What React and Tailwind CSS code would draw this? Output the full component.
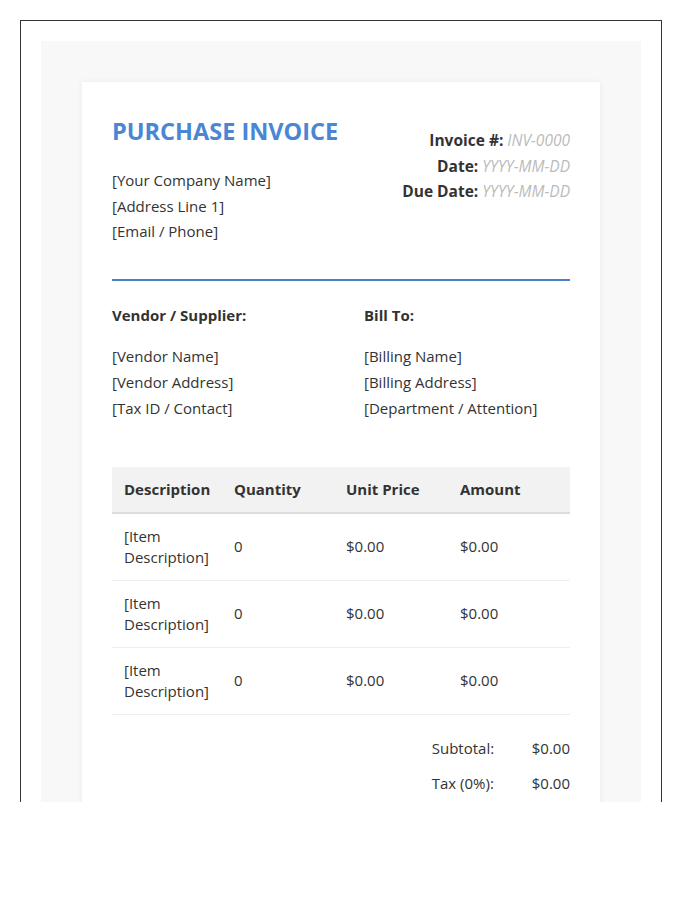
export default function App() {
  const rows = [0, 1, 2];
  return (
    <div className="bg-white w-[700px] h-[900px]" style={{ fontFamily: '"Open Sans", sans-serif' }}>
      <div className="ml-[20px] mt-[20px] w-[642px] h-[782px] border border-b-0 border-[#333] overflow-hidden p-[20px]">
        <div className="bg-[#f8f8f8] px-[41px] pt-[41px] pb-10">
          <div className="bg-white shadow-[0_0_6px_rgba(0,0,0,0.06)] p-[30px] text-[#333] text-[15px]">
            <div className="flex justify-between">
              <div>
                <h1 className="text-[23.5px] font-bold text-[#4a86d4] leading-[32px] mt-[3px]">PURCHASE INVOICE</h1>
                <div className="mt-[21px] leading-[25.6px]">
                  <p>[Your Company Name]</p>
                  <p>[Address Line 1]</p>
                  <p>[Email / Phone]</p>
                </div>
              </div>
              <div className="text-right leading-[25.5px] mt-[16px] text-[15.5px]">
                <p><b>Invoice #:</b> <i className="text-[#bbb]">INV-0000</i></p>
                <p><b>Date:</b> <i className="text-[#bbb]">YYYY-MM-DD</i></p>
                <p><b>Due Date:</b> <i className="text-[#bbb]">YYYY-MM-DD</i></p>
              </div>
            </div>
            <div className="h-[2px] bg-[#4a82c8] mt-[34px]" />
            <div className="grid grid-cols-[252px_1fr] mt-[22px] leading-[25.6px]">
              <div>
                <p className="font-bold">Vendor / Supplier:</p>
                <div className="mt-[16px]">
                  <p>[Vendor Name]</p>
                  <p>[Vendor Address]</p>
                  <p>[Tax ID / Contact]</p>
                </div>
              </div>
              <div>
                <p className="font-bold">Bill To:</p>
                <div className="mt-[16px]">
                  <p>[Billing Name]</p>
                  <p>[Billing Address]</p>
                  <p>[Department / Attention]</p>
                </div>
              </div>
            </div>
            <table className="w-full mt-[46px] table-fixed border-collapse">
              <thead>
                <tr className="bg-[#f2f2f2] border-b-2 border-[#ddd] h-[46px] text-left">
                  <th className="w-[110px] pl-3 font-bold">Description</th>
                  <th className="w-[112px] pl-3 font-bold">Quantity</th>
                  <th className="w-[114px] pl-3 font-bold">Unit Price</th>
                  <th className="pl-3 font-bold">Amount</th>
                </tr>
              </thead>
              <tbody>
                {rows.map((r) => (
                  <tr key={r} className="border-b border-[#eee] h-[67px] leading-[21px]">
                    <td className="pl-3">[Item Description]</td>
                    <td className="pl-3">0</td>
                    <td className="pl-3">$0.00</td>
                    <td className="pl-3">$0.00</td>
                  </tr>
                ))}
              </tbody>
            </table>
            <div className="flex flex-col items-end mt-[22px] gap-[12px] leading-[23px]">
              <div className="flex"><span className="w-[100px]">Subtotal:</span><span>$0.00</span></div>
              <div className="flex"><span className="w-[100px]">Tax (0%):</span><span>$0.00</span></div>
            </div>
          </div>
        </div>
      </div>
    </div>
  );
}
